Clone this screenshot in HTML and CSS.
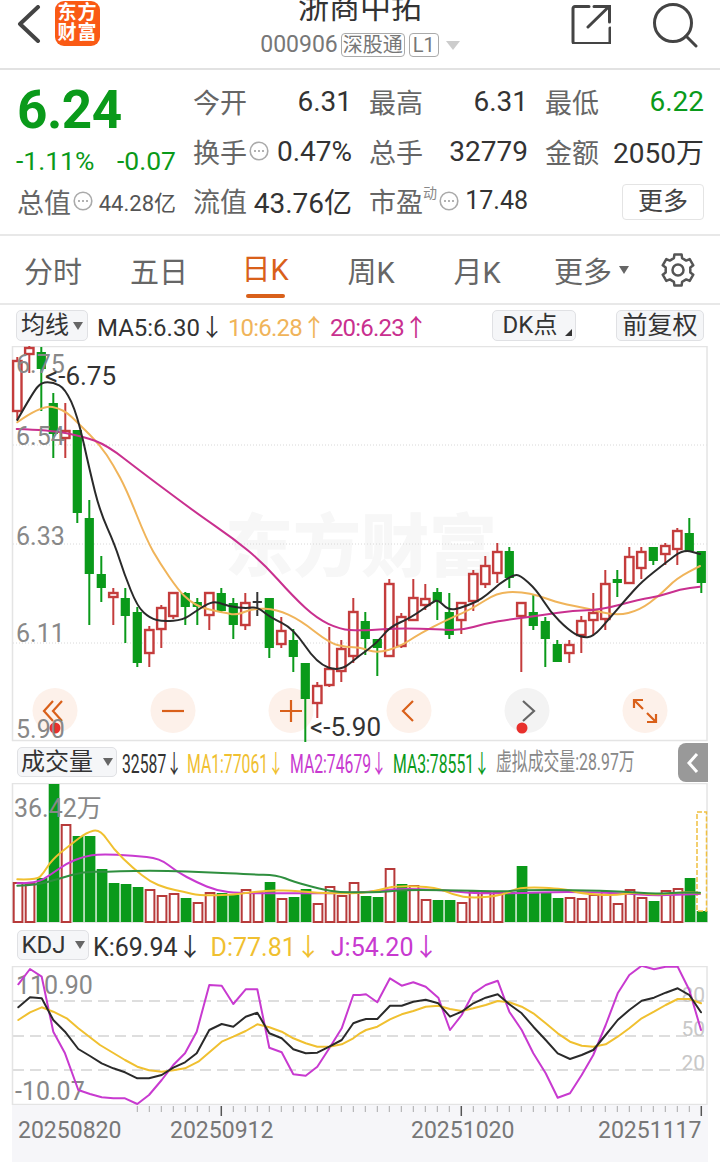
FILE: index.html
```html
<!DOCTYPE html>
<html lang="zh-CN">
<head>
<meta charset="UTF-8" />
<meta name="viewport" content="width=device-width, initial-scale=1" />
<title>浙商中拓 000906</title>
<link rel="stylesheet" href="styles.css">
</head>
<body>
  <svg class="defs" aria-hidden="true">
    <symbol id="dots" viewBox="0 0 20 20">
      <circle cx="10" cy="10" r="8.8" fill="none" stroke="#aaa" stroke-width="1.6" />
      <circle cx="6" cy="10" r="1" fill="#999" />
      <circle cx="10" cy="10" r="1" fill="#999" />
      <circle cx="14" cy="10" r="1" fill="#999" />
    </symbol>
  </svg>

  <header class="topbar">
    <div class="topbar-left">
      <svg class="back" viewBox="0 0 24 38" aria-label="返回">
        <path d="M21 2 3 19l18 17" />
      </svg>
      <div class="logo">东方<br>财富</div>
    </div>
    <div class="topbar-center">
      <div class="stock-name">浙商中拓</div>
      <div class="stock-code">
        <span>000906</span>
        <span class="tag">深股通</span>
        <span class="tag tag-small">L1</span>
        <span class="caret-light"></span>
      </div>
    </div>
    <div class="topbar-right">
      <svg class="share" viewBox="0 0 40 40" aria-label="分享">
        <path d="M18 2.5H4a2 2 0 0 0-2 2v33a2 2 0 0 0 2 2h33a2 2 0 0 0 2-2V24" />
        <path d="M17 23 38 2.5M23 2.5h15.500V18" />
      </svg>
      <svg class="search" viewBox="0 0 46 46" aria-label="搜索">
        <circle cx="21" cy="21" r="18.500" />
        <path d="m34 34 10 10" />
      </svg>
    </div>
  </header>

  <section class="quote">
    <div class="quote-main">
      <div class="price">6.24</div>
      <div class="change"><span>-1.11%</span><span>-0.07</span></div>
      <div class="cap">
        <span class="label">总值</span>
        <svg class="dots"><use href="#dots" /></svg>
        <span class="cap-value">44.28亿</span>
      </div>
    </div>
    <div class="quote-grid">
      <div class="cell"><span class="label">今开</span><span class="value">6.31</span></div>
      <div class="cell"><span class="label">最高</span><span class="value">6.31</span></div>
      <div class="cell"><span class="label">最低</span><span class="value down">6.22</span></div>

      <div class="cell"><span class="label">换手</span><svg class="dots"><use href="#dots" /></svg><span class="value">0.47%</span></div>
      <div class="cell"><span class="label">总手</span><span class="value">32779</span></div>
      <div class="cell"><span class="label">金额</span><span class="value">2050万</span></div>

      <div class="cell"><span class="label">流值</span><span class="value">43.76亿</span></div>
      <div class="cell">
        <span class="label">市盈<sup class="dyn">动</sup></span>
        <svg class="dots"><use href="#dots" /></svg>
        <span class="value value-small">17.48</span>
      </div>
      <div class="cell cell-end"><button class="more-btn" type="button">更多</button></div>
    </div>
  </section>

  <nav class="tabs">
    <a class="tab">分时</a>
    <a class="tab">五日</a>
    <a class="tab active">日K</a>
    <a class="tab">周K</a>
    <a class="tab">月K</a>
    <a class="tab tab-more">更多<span class="caret-dark"></span></a>
    <svg class="gear" viewBox="0 0 34 34" aria-label="设置">
      <path d="M12.900 5.200 13.400 1.400H20.600L21.100 5.200 25.200 7.600 28.700 6.100 32.300 12.300 29.300 14.600V19.400L32.300 21.700 28.700 27.900 25.200 26.400 21.100 28.800 20.600 32.600H13.400L12.900 28.800 8.800 26.400 5.300 27.900 1.700 21.700 4.700 19.400V14.600L1.700 12.300 5.300 6.100 8.800 7.600Z" />
      <circle cx="17" cy="17" r="5.500" />
    </svg>
  </nav>

  <div class="toolbar toolbar-ma">
    <button class="pick pick-ma" type="button">均线<span class="caret"></span></button>
    <span class="stat ma5">MA5:6.30<i>↓</i></span>
    <span class="stat ma10">10:6.28<i>↑</i></span>
    <span class="stat ma20">20:6.23<i>↑</i></span>
    <button class="pick pick-dk" type="button">DK点<span class="corner"></span></button>
    <button class="pick pick-fq" type="button">前复权</button>
  </div>
  <svg id="priceChart" class="chart chart-price" viewBox="0 346 720 396"></svg>

  <div class="toolbar toolbar-vol">
    <button class="pick pick-vol" type="button">成交量<span class="caret"></span></button>
    <div class="vol-stats">
      <span class="ink">32587<i>↓</i></span>
      <span class="gold">MA1:77061<i>↓</i></span>
      <span class="violet">MA2:74679<i>↓</i></span>
      <span class="green">MA3:78551<i>↓</i></span>
      <span class="grey">虚拟成交量:28.97万</span>
    </div>
    <div class="side-tab">
      <svg viewBox="0 0 14 22"><path d="M11 2 3 11l8 9" /></svg>
    </div>
  </div>
  <svg id="volumeChart" class="chart chart-vol" viewBox="0 783 720 140"></svg>

  <div class="toolbar toolbar-kdj">
    <button class="pick pick-kdj" type="button">KDJ<span class="caret"></span></button>
    <span class="stat stat-k">K:69.94<i>↓</i></span>
    <span class="stat stat-d gold">D:77.81<i>↓</i></span>
    <span class="stat stat-j violet">J:54.20<i>↓</i></span>
  </div>
  <svg id="kdjChart" class="chart chart-kdj" viewBox="0 966 720 139"></svg>
  <svg id="dateAxis" class="chart chart-axis" viewBox="0 1105 720 57"></svg>

  <script src="chart.js"></script>
</body>
</html>
```

FILE: styles.css
```css
/* Reset and base */
*, *::before, *::after {
  box-sizing: border-box;
}
html, body {
  margin: 0;
  height: 1166px;
  overflow: hidden;
}
body {
  width: 720px;
  background: #fff;
  color: #333;
  font-family: Roboto, 'Noto Sans CJK SC', sans-serif;
}
button {
  font-family: inherit;
  padding: 0;
  color: #333;
}
.defs {
  position: absolute;
  width: 0;
  height: 0;
}

/* Top bar */
.topbar {
  height: 70px;
  border-bottom: 2px solid #e2e2e2;
  display: grid;
  grid-template-columns: 1fr auto 1fr;
  overflow: hidden;
}
.topbar-left {
  display: flex;
  align-items: flex-start;
  padding: 5px 0 0 17px;
}
.back {
  width: 24px;
  height: 38px;
  fill: none;
  stroke: #444;
  stroke-width: 4;
  stroke-linecap: round;
  stroke-linejoin: round;
}
.logo {
  margin: -4px 0 0 14px;
  width: 45px;
  height: 45px;
  padding-top: 2px;
  border-radius: 9px;
  background: #fa5a14;
  color: #fff;
  font-size: 19px;
  font-weight: 700;
  line-height: 20px;
  text-align: center;
  letter-spacing: 1px;
}
.topbar-center {
  text-align: center;
}
.stock-name {
  margin-top: -11px;
  font-size: 31px;
  line-height: 38px;
  color: #333;
}
.stock-code {
  margin-top: 6px;
  display: flex;
  align-items: center;
  gap: 3px;
  font-size: 23px;
  line-height: 24px;
  color: #777;
}
.tag {
  border: 1px solid #aaa;
  border-radius: 4px;
  font-size: 20px;
  line-height: 22px;
  padding: 0 1px;
  color: #777;
}
.tag-small {
  padding: 0 3px;
  margin-left: 1px;
}
.caret-light {
  margin-left: 4px;
  border-style: solid;
  border-width: 9px 7px 0;
  border-color: #ccc transparent transparent;
}
.topbar-right {
  display: flex;
  align-items: flex-start;
  justify-content: flex-end;
  padding: 2px 22px 0 0;
}
.share {
  margin: 2px 41px 0 0;
  width: 40px;
  height: 40px;
  fill: none;
  stroke: #444;
  stroke-width: 3;
  stroke-linecap: round;
}
.search {
  width: 46px;
  height: 46px;
  fill: none;
  stroke: #444;
  stroke-width: 3;
  stroke-linecap: round;
}

/* Quote block */
.quote {
  height: 166px;
  border-bottom: 2px solid #e8e8e8;
  display: flex;
}
.quote-main {
  width: 193px;
  padding-left: 16px;
}
.price {
  margin-top: 10px;
  font-size: 53px;
  font-weight: 700;
  line-height: 60px;
  letter-spacing: -.5px;
  color: #0a9a1a;
  padding-left: 1px;
}
.change {
  margin-top: 6px;
  width: 160px;
  display: flex;
  justify-content: space-between;
  font-size: 26.500px;
  line-height: 30px;
  color: #0a9a1a;
}
.cap {
  margin-top: 7px;
  width: 160px;
  padding-left: 1px;
  display: flex;
  align-items: center;
  height: 36px;
}
.cap .dots {
  margin-left: 2px;
}
.cap-value {
  margin-left: auto;
  font-size: 22px;
  color: #555;
}
.quote-grid {
  margin-top: 7px;
  width: 511px;
  height: 150px;
  display: grid;
  grid-template-columns: repeat(3, 159px);
  grid-template-rows: repeat(3, 49.500px);
  column-gap: 17px;
}
.cell {
  display: flex;
  align-items: center;
  justify-content: space-between;
}
.cell-end {
  justify-content: flex-end;
  padding-top: 2px;
}
.label {
  font-size: 27px;
  color: #666;
  white-space: nowrap;
}
.value {
  margin-left: auto;
  font-size: 28px;
  color: #333;
  white-space: nowrap;
}
.value-small {
  font-size: 25px;
}
.value.down {
  color: #0a9a1a;
}
.dots {
  flex: none;
  width: 20px;
  height: 20px;
  margin-left: 2px;
}
.dyn {
  font-size: 14px;
  color: #888;
  line-height: 0;
  vertical-align: 14px;
}
.more-btn {
  width: 82px;
  height: 36px;
  border: 1px solid #e4e4e4;
  border-radius: 4px;
  background: #fff;
  font-size: 25px;
  line-height: 32px;
  color: #444;
}

/* Period tabs */
.tabs {
  height: 69px;
  border-bottom: 2px solid #e8e8e8;
  display: flex;
  align-items: center;
  position: relative;
}
.tab {
  flex: 0 0 106px;
  font-size: 29px;
  text-align: center;
  color: #666;
}
.tab.active {
  color: #d9601a;
  align-self: stretch;
  line-height: 69px;
  position: relative;
}
.tab.active::after {
  content: "";
  position: absolute;
  left: 34px;
  bottom: 5px;
  width: 39px;
  height: 4px;
  border-radius: 2px;
  background: #d9601a;
}
.tab-more {
  flex-basis: 124px;
  padding-left: 24px;
  display: flex;
  align-items: center;
}
.caret-dark {
  margin-left: 7px;
  border-style: solid;
  border-width: 8px 5px 0;
  border-color: #666 transparent transparent;
}
.gear {
  margin-left: 7px;
  width: 34px;
  height: 34px;
  fill: none;
  stroke: #555;
  stroke-width: 2.500;
  stroke-linejoin: round;
}

/* Indicator toolbars */
.toolbar {
  display: flex;
  align-items: flex-start;
  padding-left: 16px;
  white-space: nowrap;
  position: relative;
}
.toolbar-ma {
  height: 41px;
  padding-top: 5px;
  padding-right: 16px;
}
.toolbar-vol {
  height: 41px;
  padding-top: 5px;
  padding-left: 17px;
}
.toolbar-kdj {
  height: 43px;
  padding-top: 7px;
  padding-left: 17px;
}
.pick {
  height: 31px;
  border: 1px solid #e0e1e4;
  border-radius: 5px;
  background: #f5f6f8;
  display: inline-flex;
  align-items: center;
  justify-content: center;
  font-size: 24px;
  line-height: 29px;
  position: relative;
}
.caret {
  margin-left: 4px;
  border-style: solid;
  border-width: 8px 5px 0;
  border-color: #666 transparent transparent;
}
.pick-ma {
  width: 72px;
}
.pick-dk {
  width: 84px;
  margin-left: auto;
  padding-right: 8px;
}
.corner {
  position: absolute;
  right: 3px;
  bottom: 4px;
  border-style: solid;
  border-width: 0 0 7px 7px;
  border-color: transparent transparent #333;
}
.pick-fq {
  width: 88px;
  margin-left: 40px;
  font-size: 25px;
}
.pick-vol {
  width: 100px;
  height: 30px;
  font-size: 24px;
}
.pick-vol .caret {
  margin-left: 10px;
}
.pick-kdj {
  width: 72px;
  height: 30px;
  font-size: 24px;
}
.pick-kdj .caret {
  margin-left: 9px;
}
.stat {
  font-size: 24px;
  line-height: 31px;
}
.stat i, .vol-stats i {
  font-style: normal;
  font-family: 'Noto Sans CJK SC', sans-serif;
}
.stat i {
  display: inline-block;
  width: 19px;
  text-align: right;
}
.ma5 {
  margin-left: 9px;
  color: #333;
}
.ma10 {
  margin-left: 9px;
  color: #f0b45a;
  letter-spacing: -.8px;
}
.ma20 {
  margin-left: 9px;
  color: #c9308f;
  letter-spacing: -.8px;
}
.stat-k {
  margin-left: 4px;
  font-size: 25px;
  line-height: 30px;
}
.stat-d {
  margin-left: 11px;
  font-size: 25px;
  line-height: 30px;
}
.stat-j {
  margin-left: 13px;
  font-size: 25px;
  line-height: 30px;
}
.stat-k i, .stat-d i, .stat-j i {
  width: 22px;
}
.gold {
  color: #f0c030;
}
.violet {
  color: #c83ad0;
}
.ink {
  color: #333;
}
.green {
  color: #0a9a1a;
}
.grey {
  color: #888;
}

.vol-stats {
  display: flex;
  margin-left: 5px;
  font-size: 25px;
  line-height: 30px;
}
.vol-stats span {
  flex: 0 0 103px;
  min-width: 0;
  transform: scaleX(.63);
  transform-origin: 0 50%;
}
.vol-stats .ink {
  flex-basis: 65px;
}
.vol-stats .grey {
  flex-basis: 160px;
  font-size: 24px;
  transform: scaleX(.66);
}
.side-tab {
  position: absolute;
  left: 678px;
  top: 1px;
  width: 30px;
  height: 39px;
  border-radius: 8px 0 0 8px;
  background: #999;
  display: flex;
  align-items: center;
  justify-content: center;
}
.side-tab svg {
  width: 14px;
  height: 22px;
  fill: none;
  stroke: #fff;
  stroke-width: 3;
}

/* Charts */
.chart {
  display: block;
  width: 720px;
}
.chart-price {
  height: 396px;
}
.chart-vol {
  height: 140px;
}
.chart-kdj {
  height: 139px;
}
.chart-axis {
  height: 57px;
}
.chart text {
  font-family: Roboto, 'Noto Sans CJK SC', sans-serif;
}
.frame {
  fill: none;
  stroke: #e4e4e4;
  stroke-width: 1.500;
}
.axis-label {
  font-size: 25px;
  fill: #888;
}
.axis-label-light {
  font-size: 21px;
  fill: #c8c8c8;
}
.mark-label {
  font-size: 26px;
  fill: #333;
}
.date-label {
  font-size: 23px;
  fill: #777;
}
.watermark {
  font-size: 68px;
  font-weight: 900;
  fill: #f7f7f7;
}
```

FILE: chart.js
```js
(function(){
  const NS = 'http://www.w3.org/2000/svg';
  const RED = '#c43c3c';
  const GREEN = '#0a9a1a';
  const ORANGE = '#d9601a';

  function add(parent, tag, attrs, text) {
    const el = document.createElementNS(NS, tag);
    Object.keys(attrs).forEach(k => el.setAttribute(k, attrs[k]));
    if (text) el.textContent = text;
    parent.appendChild(el);
    return el;
  }

  // Each series was traced in two halves: [x, y] in a 3x view from an origin
  function trace(points, ox, oy) {
    return points.map(p => [ox + p[0] / 3, oy + p[1] / 3]);
  }

  function line(svg, points, color, width) {
    add(svg, 'polyline', {
      points: points.map(p => p[0].toFixed(1) + ',' + p[1].toFixed(1)).join(' '),
      fill: 'none',
      stroke: color,
      'stroke-width': width || 2,
      'stroke-linejoin': 'round',
      'stroke-linecap': 'round'
    });
  }

  // Moving averages: quadratic curve through the midpoints
  function curve(svg, points, color, width) {
    let d = 'M' + points[0][0].toFixed(1) + ' ' + points[0][1].toFixed(1);
    for (let i = 1; i < points.length - 1; i++) {
      const mx = (points[i][0] + points[i + 1][0]) / 2;
      const my = (points[i][1] + points[i + 1][1]) / 2;
      d += 'Q' + points[i][0].toFixed(1) + ' ' + points[i][1].toFixed(1) + ' ' + mx.toFixed(1) + ' ' + my.toFixed(1);
    }
    const last = points[points.length - 1];
    d += 'L' + last[0].toFixed(1) + ' ' + last[1].toFixed(1);
    add(svg, 'path', { d: d, fill: 'none', stroke: color, 'stroke-width': width || 2, 'stroke-linecap': 'round' });
  }

  /* ---------- price chart ---------- */
  // r/g/k, high, body top, body bottom, low
  const candles = [
    ['r',357,360,412,420],['r',340,347,355,373],['g',347,352,369,411],['g',393,403,434,458],
    ['r',403,430,439,458],['g',430,430,513,523],['g',500,518,574,625],['g',556,574,588,602],
    ['r',588,592,598,625],['g',588,598,616,643],['g',607,612,663,667],['r',626,629,654,667],
    ['r',605,607,630,648],['r',592,592,617,619],['g',592,593,607,625],['g',598,602,607,625],
    ['r',592,592,616,630],['g',588,593,611,612],['g',598,603,625,639],['r',593,602,626,630],
    ['k',592,601,603,616],['g',598,598,648,658],['r',617,630,645,648],['g',629,640,657,672],
    ['g',663,663,699,742],['r',682,685,704,718],['r',627,668,686,687],['r',640,648,672,682],
    ['r',598,611,657,663],['g',612,621,639,655],['g',639,639,648,676],['r',579,583,657,657],
    ['r',613,616,647,648],['r',579,597,621,621],['r',584,598,606,610],['g',588,592,602,620],
    ['g',593,612,635,639],['r',602,602,621,634],['r',570,573,602,611],['r',556,565,585,588],
    ['r',543,551,574,583],['g',547,551,578,588],['r',602,602,617,672],['g',595,612,626,630],
    ['g',617,621,639,667],['g',640,644,662,662],['r',640,644,654,663],['r',616,620,636,653],
    ['r',593,612,621,635],['r',570,583,620,630],['g',570,579,583,597],['r',547,556,584,584],
    ['r',547,551,569,579],['g',547,547,561,565],['r',543,545,555,565],['r',528,530,550,565],
    ['g',518,533,551,551],['g',551,551,583,593]
  ];

  const ma5 = trace([[52,345],[100,260],[125,232],[160,232],[195,250],[232,330],[270,500],[300,620],[345,720]], 0, 305)
    .concat(trace([[372,100],[412,200],[450,235],[490,245],[550,240],[585,215],[625,190],[650,185],[690,200],[740,205],[772,200],[810,232],[880,265],[950,370],[1020,395],[1080,345]], 0, 540))
    .concat(trace([[50,310],[90,260],[150,235],[220,185],[235,180],[265,210],[300,205],[350,185],[380,165],[420,130],[460,105],[480,105],[530,150],[570,215],[625,270],[665,293],[700,290],[745,240],[800,175],[845,125],[915,70],[970,28],[1020,42]], 360, 540));

  const ma10 = trace([[52,352],[125,300],[190,312],[240,360],[300,420],[340,480],[380,555]], 0, 305)
    .concat(trace([[440,0],[480,70],[535,150],[570,185],[610,205],[680,220],[710,225],[760,205],[830,208],[900,240],[990,310],[1040,322],[1080,322]], 0, 540))
    .concat(trace([[50,340],[120,320],[180,280],[270,235],[340,205],[410,158],[480,155],[540,168],[600,190],[680,205],[770,228],[840,210],[900,165],[950,115],[1020,78]], 360, 540));

  const ma20 = trace([[50,372],[150,375],[250,395],[320,420],[430,505],[590,625],[700,700]], 0, 305)
    .concat(trace([[790,70],[880,170],[950,235],[1020,268],[1080,272]], 0, 540))
    .concat(trace([[70,268],[130,265],[230,268],[300,272],[380,250],[450,238],[550,225],[640,212],[720,210],[840,178],[900,168],[960,148],[1020,140]], 360, 540));

  function drawPrice() {
    const svg = document.getElementById('priceChart');
    add(svg, 'text', { x: 225, y: 571, class: 'watermark' }, '东方财富');
    [445, 544, 643].forEach(y => {
      add(svg, 'line', { x1: 13, x2: 707, y1: y, y2: y, stroke: '#d8d8d8', 'stroke-width': 1, 'stroke-dasharray': '1 2' });
    });
    add(svg, 'rect', { x: 12.5, y: 346.5, width: 694.5, height: 394, class: 'frame' });

    [55, 173, 291, 409, 645].forEach(cx => {
      add(svg, 'circle', { cx: cx, cy: 710.5, r: 22.5, fill: '#fdf1ea' });
    });
    add(svg, 'circle', { cx: 527, cy: 710.5, r: 22.5, fill: '#f3f3f3' });

    candles.forEach((c, i) => {
      const x = 17.3 + 12 * i;
      const color = c[0] === 'r' ? RED : c[0] === 'g' ? GREEN : '#333';
      add(svg, 'line', { x1: x, x2: x, y1: c[1], y2: c[4], stroke: color, 'stroke-width': 2 });
      if (c[0] === 'r') {
        add(svg, 'rect', { x: x - 4.2, y: c[2] + 1, width: 8.4, height: c[3] - c[2] - 2, fill: '#fff', stroke: color, 'stroke-width': 2.4 });
      } else {
        add(svg, 'rect', { x: x - 4.6, y: c[2], width: 9.2, height: c[3] - c[2], fill: color });
      }
    });

    curve(svg, ma10, '#f0b45a');
    curve(svg, ma20, '#c9308f');
    curve(svg, ma5, '#2a2a2a');

    const icon = { fill: 'none', stroke: ORANGE, 'stroke-width': 2.2 };
    add(svg, 'path', Object.assign({ d: 'M53 701 44 711l9 10M62 701 53 711l9 10' }, icon));
    add(svg, 'path', Object.assign({ d: 'M162 711h22' }, icon));
    add(svg, 'path', Object.assign({ d: 'M280 711h22M291 700v22' }, icon));
    add(svg, 'path', Object.assign({ d: 'M413 701 403 711l10 10' }, icon));
    add(svg, 'path', { d: 'M523 701l11 10-11 10', fill: 'none', stroke: '#666', 'stroke-width': 2.2 });
    add(svg, 'path', Object.assign({ d: 'M634 708v-8h9M634 700l9 9M656 714v8h-9M656 722l-9-9' }, icon));
    add(svg, 'circle', { cx: 55, cy: 728, r: 5.5, fill: '#e8302c' });
    add(svg, 'circle', { cx: 522, cy: 728, r: 5.5, fill: '#e8302c' });

    [['6.75',373],['6.54',445],['6.33',545],['6.11',642],['5.90',738]].forEach(l => {
      add(svg, 'text', { x: 16, y: l[1], class: 'axis-label' }, l[0]);
    });
    add(svg, 'text', { x: 45, y: 385, class: 'mark-label' }, '<-6.75');
    add(svg, 'text', { x: 310, y: 736, class: 'mark-label' }, '<-5.90');
  }

  /* ---------- volume chart ---------- */
  const volume = [
    ['r',882],['r',883],['g',878],['g',784],['r',824],['g',836],['g',836],['g',869],['g',883],['g',884],
    ['g',887],['r',889],['r',895],['r',893],['g',898],['r',902],['r',892],['g',893],['g',895],['r',889],
    ['r',892],['g',882],['r',898],['g',897],['g',889],['r',903],['r',886],['r',895],['r',882],['g',896],
    ['g',897],['r',868],['g',884],['r',885],['r',899],['g',900],['g',900],['r',902],['r',891],['r',892],
    ['r',892],['g',892],['g',866],['g',892],['g',892],['g',898],['r',897],['r',898],['r',894],['r',891],
    ['r',903],['r',889],['r',897],['g',901],['r',890],['r',888],['g',878],['g',911]
  ];

  function drawVolume() {
    const svg = document.getElementById('volumeChart');
    const bottom = 922;
    add(svg, 'rect', { x: 12.5, y: 783.5, width: 694.5, height: 139, class: 'frame' });

    volume.forEach((v, i) => {
      const x = 12.7 + 12 * i;
      if (v[0] === 'g') {
        add(svg, 'rect', { x: x, y: v[1], width: 10.7, height: bottom - v[1], fill: GREEN });
      } else {
        add(svg, 'rect', { x: x + 1, y: v[1] + 1, width: 8.7, height: bottom - v[1] - 1, fill: '#fff', stroke: '#b73a3a', 'stroke-width': 2 });
      }
    });
    // today's projected volume
    add(svg, 'rect', { x: 697, y: 812, width: 9.5, height: 99, fill: 'none', stroke: '#f0c040', 'stroke-width': 1.5, 'stroke-dasharray': '5 2' });

    const magenta = trace([[52,415],[110,415],[150,390],[200,355],[250,335],[300,327],[400,332],[480,340],[530,380],[590,412],[650,437],[720,445],[900,445],[1080,445]], 0, 745)
      .concat(trace([[110,430],[250,435],[340,445],[460,445],[620,440],[800,445],[880,452],[1020,447]], 360, 745));
    const gold = trace([[52,403],[110,405],[130,385],[155,345],[210,300],[260,262],[300,252],[340,312],[400,370],[450,410],[500,430],[550,440],[600,452],[700,450],[800,435],[900,438],[970,445],[1080,445]], 0, 745)
      .concat(trace([[60,435],[110,422],[230,427],[280,450],[340,460],[430,450],[480,425],[620,432],[660,445],[760,452],[820,442],[900,450],[980,440],[1020,445]], 360, 745));
    const green = trace([[52,422],[110,420],[180,400],[250,380],[320,380],[400,377],[500,377],[620,382],[750,388],[830,390],[880,410],[960,432],[1020,442],[1080,442]], 0, 745)
      .concat(trace([[60,442],[120,435],[250,435],[430,440],[480,435],[640,435],[800,440],[880,447],[960,442],[1020,443]], 360, 745));

    curve(svg, magenta, '#c83ad0');
    curve(svg, gold, '#f0c030');
    curve(svg, green, '#2f8f3f');

    add(svg, 'text', { x: 14, y: 817, class: 'axis-label' }, '36.42万');
  }

  /* ---------- KDJ chart ---------- */
  const k = trace([[55,247],[90,217],[125,220],[160,285],[195,320],[235,372],[270,393],[305,415],[340,430],[375,442],[412,460],[447,460],[485,450],[520,428],[555,412],[590,385],[628,315],[665,297],[700,305],[737,275],[772,263],[808,325],[845,340],[880,373],[917,385],[952,383],[988,365],[1025,345],[1060,295],[1080,287]], 0, 925)
    .concat(trace([[18,282],[52,282],[90,242],[125,242],[160,230],[197,224],[235,235],[270,275],[305,260],[340,235],[377,218],[413,208],[448,238],[485,265],[520,305],[557,345],[593,385],[630,402],[665,390],[700,375],[737,330],[773,285],[808,255],[845,227],[882,218],[917,203],[953,190],[988,210],[1023,262]], 360, 925));

  const d = trace([[55,285],[90,262],[125,247],[160,260],[200,280],[235,310],[300,360],[375,405],[412,425],[447,436],[485,440],[520,436],[555,430],[595,410],[630,380],[665,350],[700,335],[737,318],[772,298],[808,307],[845,320],[880,340],[917,355],[952,365],[988,365],[1025,358],[1060,340],[1080,325]], 0, 925)
    .concat(trace([[18,315],[52,305],[90,283],[125,268],[160,258],[197,245],[235,242],[270,252],[305,258],[340,250],[377,240],[413,228],[448,232],[485,245],[520,265],[557,295],[593,325],[630,350],[665,362],[700,365],[737,358],[773,335],[808,310],[845,280],[882,260],[917,240],[953,222],[988,222],[1023,235]], 360, 925));

  const j = trace([[55,178],[90,132],[125,155],[160,320],[195,385],[235,495],[270,507],[305,517],[340,520],[375,520],[412,537],[447,510],[485,465],[520,420],[555,385],[590,320],[628,180],[665,182],[700,237],[737,193],[772,193],[808,368],[845,382],[880,448],[917,452],[952,425],[988,370],[1025,310],[1060,210],[1080,210]], 0, 925)
    .concat(trace([[18,208],[52,232],[90,160],[125,182],[160,172],[197,185],[235,218],[270,315],[305,270],[340,205],[377,180],[413,167],[448,260],[485,315],[520,385],[557,445],[593,518],[630,505],[665,450],[700,390],[737,300],[773,205],[808,150],[845,122],[882,133],[917,125],[953,125],[988,195],[1023,315]], 360, 925));

  function drawKdj() {
    const svg = document.getElementById('kdjChart');
    [1001, 1036, 1070].forEach(y => {
      add(svg, 'line', { x1: 13, x2: 707, y1: y, y2: y, stroke: '#d4d4d4', 'stroke-width': 1.5, 'stroke-dasharray': '11 6' });
    });
    add(svg, 'rect', { x: 12.5, y: 966.5, width: 694.5, height: 138, class: 'frame' });

    [['110.90',16,994],['-10.07',15,1100]].forEach(l => {
      add(svg, 'text', { x: l[1], y: l[2], class: 'axis-label' }, l[0]);
    });
    [['80',1002],['50',1036],['20',1070]].forEach(l => {
      add(svg, 'text', { x: 705, y: l[1], 'text-anchor': 'end', class: 'axis-label-light' }, l[0]);
    });

    line(svg, j, '#c83ad0');
    line(svg, d, '#f0c030');
    line(svg, k, '#2a2a2a');
  }

  /* ---------- date axis ---------- */
  function drawAxis() {
    const svg = document.getElementById('dateAxis');
    add(svg, 'rect', { x: 12, y: 1105, width: 696, height: 57, fill: '#f6f6f9' });
    for (let x = 137.3; x < 702; x += 12) {
      const major = [221.3, 461.3, 701.3].some(m => Math.abs(m - x) < 1);
      add(svg, 'line', {
        x1: x, x2: x, y1: 1106, y2: major ? 1116 : 1112,
        stroke: major ? '#555' : '#aaa',
        'stroke-width': major ? 1.5 : 1
      });
    }
    [['20250820',18],['20250912',170],['20251020',411],['20251117',598]].forEach(l => {
      add(svg, 'text', { x: l[1], y: 1138, class: 'date-label' }, l[0]);
    });
  }

  drawPrice();
  drawVolume();
  drawKdj();
  drawAxis();
})();
```
